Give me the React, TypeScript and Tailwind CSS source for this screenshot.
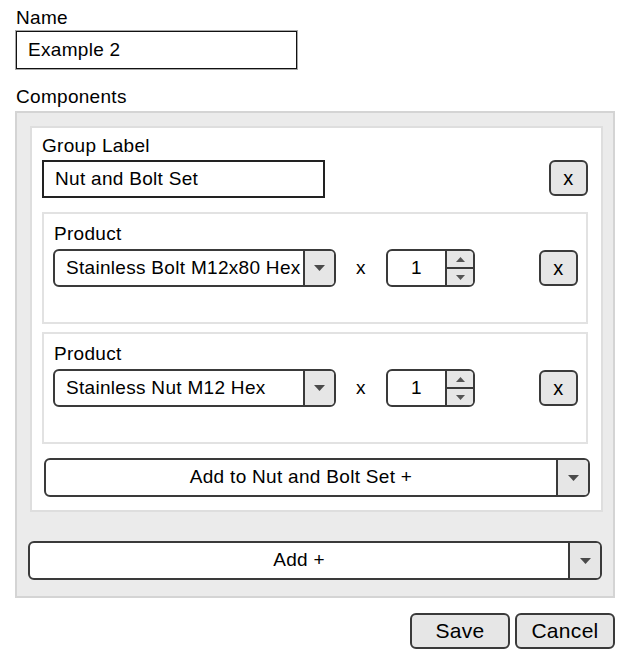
import React from "react";

function Caret() {
  return (
    <svg width="11" height="6" viewBox="0 0 11 6">
      <path d="M0 0h11L5.5 6z" fill="#4a4a4a" />
    </svg>
  );
}

function SpinUp() {
  return (
    <svg width="9" height="5" viewBox="0 0 9 5">
      <path d="M0 5h9L4.5 0z" fill="#555" />
    </svg>
  );
}

function SpinDown() {
  return (
    <svg width="9" height="5" viewBox="0 0 9 5">
      <path d="M0 0h9L4.5 5z" fill="#555" />
    </svg>
  );
}

function XButton() {
  return (
    <div className="flex h-[36px] w-[39px] items-center justify-center rounded-[6px] border-2 border-[#3a3a3a] bg-[#e6e6e6] text-[20px] leading-none">
      x
    </div>
  );
}

function Select({ value }: { value: string }) {
  return (
    <div className="flex h-[38px] w-[283px] overflow-hidden rounded-[6px] border-2 border-[#3a3a3a] bg-white">
      <div className="flex min-w-0 flex-1 items-center overflow-hidden whitespace-nowrap pl-[11px]">
        {value}
      </div>
      <div className="flex w-[31px] shrink-0 items-center justify-center border-l-2 border-[#3a3a3a] bg-[#e6e6e6]">
        <Caret />
      </div>
    </div>
  );
}

function NumberInput() {
  return (
    <div className="flex h-[38px] w-[89px] overflow-hidden rounded-[6px] border-2 border-[#3a3a3a] bg-white">
      <div className="flex flex-1 items-center justify-center">1</div>
      <div className="flex w-[28px] shrink-0 flex-col border-l-2 border-[#3a3a3a] bg-[#e6e6e6]">
        <div className="flex flex-1 items-center justify-center border-b-2 border-[#3a3a3a]">
          <SpinUp />
        </div>
        <div className="flex flex-1 items-center justify-center">
          <SpinDown />
        </div>
      </div>
    </div>
  );
}

function ProductBox({ value }: { value: string }) {
  return (
    <div className="w-[546px] border-2 border-[#e2e2e2] bg-white pb-[35px] pl-[9px] pr-[8px] pt-[10px]">
      <div className="ml-[1px] h-[21px] leading-[19px]">Product</div>
      <div className="mt-[4px] flex items-center">
        <Select value={value} />
        <span className="w-[50px] text-center">x</span>
        <NumberInput />
        <div className="ml-auto">
          <XButton />
        </div>
      </div>
    </div>
  );
}

function SplitButton({ label, width }: { label: string; width: string }) {
  return (
    <div className={`flex h-[39px] overflow-hidden rounded-[6px] border-2 border-[#3a3a3a] bg-white ${width}`}>
      <div className="flex flex-1 items-center justify-center">{label}</div>
      <div className="flex w-[32px] shrink-0 items-center justify-center border-l-2 border-[#3a3a3a] bg-[#e6e6e6]">
        <Caret />
      </div>
    </div>
  );
}

export default function App() {
  return (
    <div className="min-h-[660px] bg-white pl-[16px] pt-[8px] font-['Liberation_Sans',Arial,sans-serif] text-[19px] tracking-[0.3px] text-black">
      <div className="h-[21px] leading-[19px]">Name</div>
      <div className="mt-[2px] flex h-[38px] w-[281px] items-center border border-[#111] pl-[11px] shadow-[0_0_0_1px_#a8a8a8]">
        Example 2
      </div>
      <div className="mt-[18px] h-[21px] leading-[19px]">Components</div>
      <div className="ml-[-1px] mt-[3px] w-[600px] border-2 border-[#d4d4d4] bg-[#ebebeb] pb-[16px] pt-[13px]">
        <div className="ml-[13px] w-[573px] border-2 border-[#dedede] bg-white pb-[13px] pl-[10px] pr-[13px] pt-[8px]">
          <div className="h-[21px] leading-[19px]">Group Label</div>
          <div className="mt-[3px] flex items-start">
            <div className="flex h-[38px] w-[283px] items-center border-2 border-[#222] pl-[11px]">
              Nut and Bolt Set
            </div>
            <div className="ml-auto">
              <XButton />
            </div>
          </div>
          <div className="mt-[14px]">
            <ProductBox value="Stainless Bolt M12x80 Hex" />
          </div>
          <div className="mt-[8px]">
            <ProductBox value="Stainless Nut M12 Hex" />
          </div>
          <div className="ml-[2px] mt-[14px]">
            <SplitButton label="Add to Nut and Bolt Set +" width="w-[546px]" />
          </div>
        </div>
        <div className="ml-[11px] mt-[29px]">
          <SplitButton label="Add +" width="w-[574px]" />
        </div>
      </div>
      <div className="mt-[15px] flex w-[599px] justify-end gap-[5px]">
        <div className="flex h-[36px] w-[100px] items-center justify-center rounded-[6px] border-2 border-[#3a3a3a] bg-[#e6e6e6] text-[21px]">
          Save
        </div>
        <div className="flex h-[36px] w-[100px] items-center justify-center rounded-[6px] border-2 border-[#3a3a3a] bg-[#e6e6e6] text-[21px]">
          Cancel
        </div>
      </div>
    </div>
  );
}
